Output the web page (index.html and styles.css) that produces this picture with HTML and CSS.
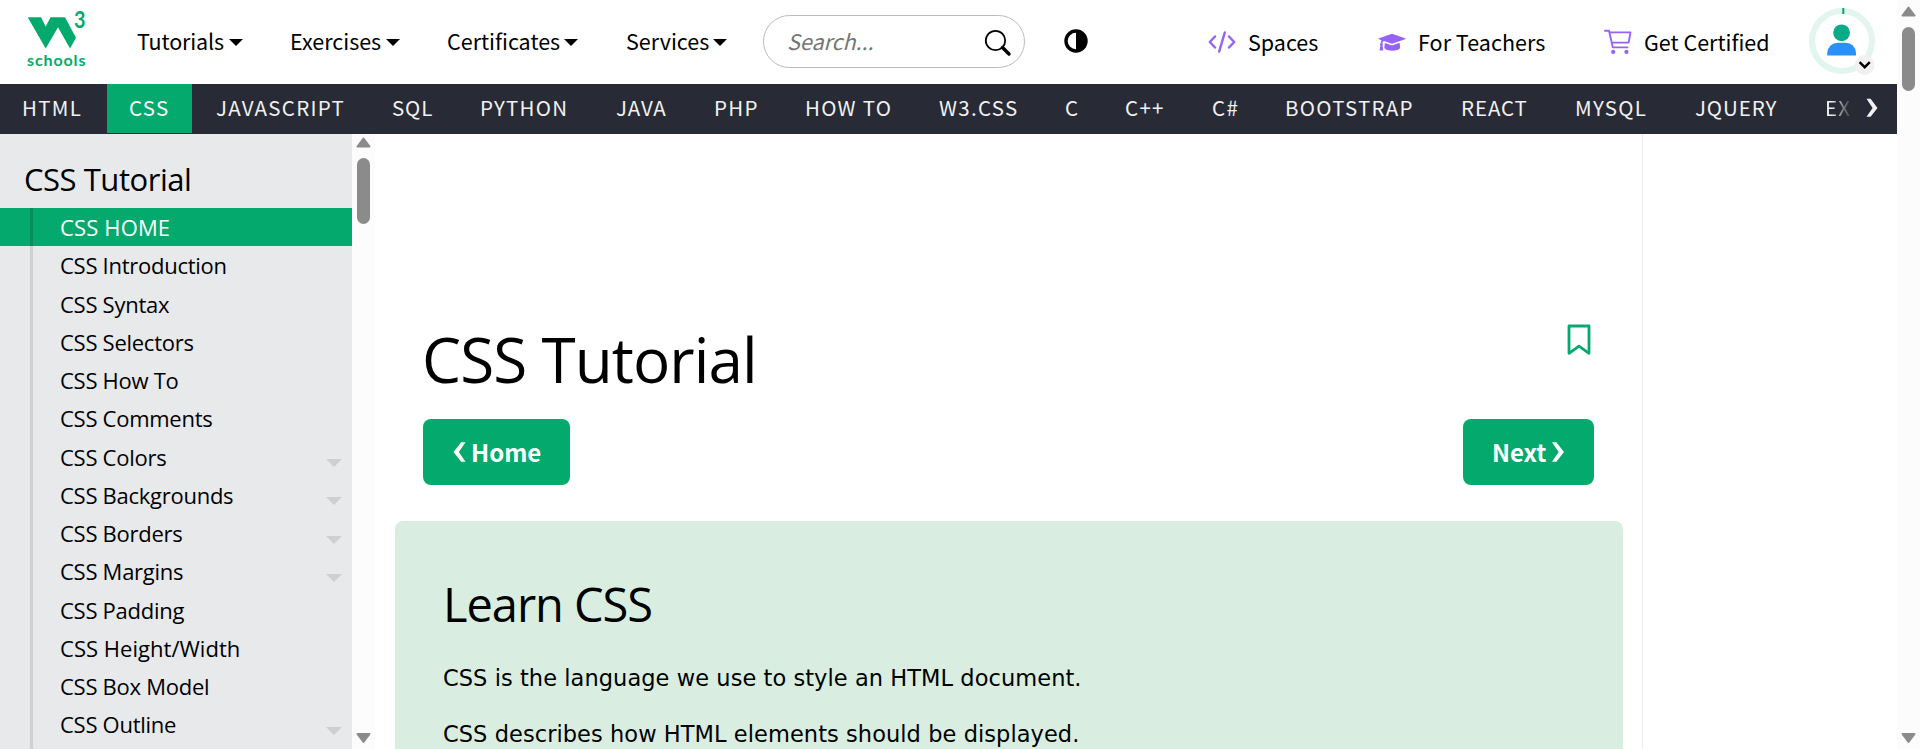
FILE: index.html
```html
<!DOCTYPE html>
<html lang="en">
<head>
<meta charset="utf-8">
<title>CSS Tutorial</title>
<link rel="stylesheet" href="styles.css">
</head>
<body>
<div class="window">
  <div class="page">
    <header class="top">
      <a class="logo"><svg width="64" height="66" viewBox="25 4 64 66">
        <path fill="#04aa6d" d="M27.7 17.3H41L45.7 26.5L50.6 17.3H65L76 37.7L70 48.4L58 27.3L45.7 48.6Z"/>
        <text class="logo-three" x="74" y="28" textLength="11.5" lengthAdjust="spacingAndGlyphs">3</text>
        <text class="logo-name" x="27" y="66" textLength="58.5">schools</text>
      </svg></a>
      <nav class="menu">
        <a class="menu-item tutorials">Tutorials<i class="caret"></i></a>
        <a class="menu-item exercises">Exercises<i class="caret"></i></a>
        <a class="menu-item certificates">Certificates<i class="caret"></i></a>
        <a class="menu-item services">Services<i class="caret"></i></a>
      </nav>
      <div class="search">
        <span>Search...</span>
        <svg width="26" height="26" viewBox="0 0 26 26" fill="none" stroke="#000"><circle cx="10.5" cy="10.5" r="9.7" stroke-width="1.8"/><path d="M17.5 17.5L24 24" stroke-width="3.4" stroke-linecap="round"/></svg>
      </div>
      <svg class="contrast" width="24" height="24" viewBox="0 0 24 24"><circle cx="12" cy="12" r="10" fill="#fff" stroke="#000" stroke-width="3.4"/><path d="M12 1a11 11 0 0 1 0 22z"/></svg>
      <nav class="tools">
        <a class="tool spaces"><svg width="28" height="24" viewBox="0 0 28 24" fill="none" stroke="#9763f6" stroke-width="2.5" stroke-linecap="round" stroke-linejoin="round"><path d="M7 6.5L1.8 12L7 17.5M21 6.5L26.2 12L21 17.5M16.8 2.5L11.2 21.5"/></svg><span>Spaces</span></a>
        <a class="tool teachers"><svg width="28" height="24" viewBox="0 0 28 24"><path fill="#9763f6" d="M14 3.8L27 8.2Q28.2 8.7 27 9.3L14 13.8L6 11.1Q4.5 11.5 4.4 13.5Q5.5 14.5 4.5 15.7L5.3 20.5H1.5L2.4 15.7Q1.3 14.4 2.7 13.2Q2.8 11.5 3.6 10.3L1 9.3Q0 8.7 1 8.2ZM6.9 13L14 15.4L21.6 12.8L22.2 18Q20 20.7 14.3 20.7Q8.5 20.7 6.3 18Z"/></svg><span>For Teachers</span></a>
        <a class="tool certified"><svg width="28" height="26" viewBox="0 0 28 26" fill="none" stroke="#9763f6" stroke-width="1.9" stroke-linejoin="round" stroke-linecap="round"><path d="M1 1.8H5L8.8 18.4H23.5M5.4 3.4H26.5L24.6 13.6H7.8"/><circle cx="9.2" cy="22.9" r="2.1" fill="#9763f6" stroke="none"/><circle cx="22.4" cy="22.9" r="2.1" fill="#9763f6" stroke="none"/></svg><span>Get Certified</span></a>
      </nav>
      <svg class="avatar" width="68" height="70" viewBox="0 0 68 70">
        <circle cx="34" cy="34" r="30" fill="none" stroke="#e2f5ee" stroke-width="6"/>
        <path d="M34.3 1h2v6h-2z" fill="#04aa6d"/>
        <circle cx="33.6" cy="25.8" r="8.4" fill="#0caa86"/>
        <path d="M19.2 48.6V46Q20.5 36 30 35.8H37.5Q47 36 48 46V48.6Z" fill="#2b90ff"/>
        <circle cx="56.7" cy="58" r="10" fill="#f1f1f1"/>
        <path d="M51.6 55.2L56.7 60.2L61.8 55.2" fill="none" stroke="#000" stroke-width="2.4"/>
      </svg>
    </header>
    <nav class="langs">
      <a>HTML</a><a class="active">CSS</a><a>JAVASCRIPT</a><a class="tight">SQL</a><a>PYTHON</a><a class="tight">JAVA</a><a>PHP</a><a>HOW TO</a><a>W3.CSS</a><a>C</a><a>C++</a><a>C#</a><a>BOOTSTRAP</a><a class="tight">REACT</a><a>MYSQL</a><a class="tight">JQUERY</a><a class="cut">EXCEL</a>
      <span class="more"><svg width="12" height="20" viewBox="0 0 12 20"><path d="M.5 .8H4.6L11.5 10L4.6 18.8H.5L6.6 10Z" fill="#f1f1f1"/></svg></span>
    </nav>
    <div class="body">
      <aside class="side">
        <h2>CSS Tutorial</h2>
        <ul>
          <li class="active roomy">CSS HOME</li>
          <li>CSS Introduction</li>
          <li>CSS Syntax</li>
          <li>CSS Selectors</li>
          <li>CSS How To</li>
          <li>CSS Comments</li>
          <li class="sub">CSS Colors</li>
          <li class="sub">CSS Backgrounds</li>
          <li class="sub">CSS Borders</li>
          <li class="sub">CSS Margins</li>
          <li>CSS Padding</li>
          <li class="wide">CSS Height/Width</li>
          <li>CSS Box Model</li>
          <li class="sub">CSS Outline</li>
        </ul>
      </aside>
      <div class="scroll side-scroll">
        <svg width="15" height="11" viewBox="0 0 15 11"><path d="M7.5 1.5L13.5 9.5H1.5Z"/></svg>
        <div class="thumb"></div>
        <svg class="down" width="15" height="12" viewBox="0 0 15 12"><path d="M7.5 10L13.5 2H1.5Z"/></svg>
      </div>
      <main class="main">
        <div class="title"><h1>CSS Tutorial</h1>
          <svg width="24" height="32" viewBox="0 0 24 32"><path d="M2 2H22V29.3L12 22.2L2 29.3Z" fill="none" stroke="#04aa6d" stroke-width="2.8" stroke-linejoin="round"/></svg>
        </div>
        <div class="pager">
          <a class="btn"><svg width="12" height="20" viewBox="0 0 12 20"><path d="M12.5 .3H8.2L.5 10L8.2 19.7H12.5L5.8 10Z" fill="#fff"/></svg>Home</a>
          <a class="btn next">Next<svg width="12" height="20" viewBox="0 0 12 20"><path d="M0 .3H4.3L12 10L4.3 19.7H0L6.7 10Z" fill="#fff"/></svg></a>
        </div>
        <section class="panel">
          <h2>Learn CSS</h2>
          <p>CSS is the language we use to style an HTML document.</p>
          <p>CSS describes how HTML elements should be displayed.</p>
        </section>
      </main>
    </div>
  </div>
  <div class="scroll page-scroll">
    <svg width="15" height="11" viewBox="0 0 15 11"><path d="M7.5 1.5L13.5 9.5H1.5Z"/></svg>
    <div class="thumb"></div>
    <svg class="down" width="15" height="12" viewBox="0 0 15 12"><path d="M7.5 10L13.5 2H1.5Z"/></svg>
  </div>
</div>
</body>
</html>
```
FILE: styles.css
```css
* { box-sizing: border-box; margin: 0; padding: 0; }
body { background: #fff; color: #000; overflow: hidden; font-family: "Open Sans", sans-serif; }
svg { display: block; flex: none; overflow: visible; }
.window { display: flex; width: 1920px; height: 749px; overflow: hidden; }
.page { width: 1897px; display: flex; flex-direction: column; }

/* Header */
.top { height: 84px; display: flex; align-items: flex-start; font: 21.5px/81px "Noto Sans CJK SC", sans-serif; white-space: nowrap; }
.logo { padding: 4px 0 0 25px; width: 137px; }
.logo-three { font: bold 22px Lato, sans-serif; fill: #04aa6d; }
.logo-name { font: bold 16px Lato, sans-serif; fill: #04aa6d; }
.menu { display: flex; }
.menu-item { display: flex; align-items: center; justify-content: space-between; margin-right: 47px; }
.tutorials { width: 106px; letter-spacing: -.15px; }
.exercises { width: 110px; }
.certificates { width: 131px; }
.services { width: 102px; margin-right: 36px; padding-left: 1px; }
.caret { border: 7px solid transparent; border-top: 7.5px solid #000; border-bottom: 0; margin-top: 4px; }
.search { width: 262px; height: 53px; margin-top: 15px; padding: 0 13px 0 23px; border: 1px solid #bbb; border-radius: 27px; display: flex; align-items: center; justify-content: space-between; color: #757575; font-style: italic; line-height: 50px; }
.search span { margin-top: -1px; }
.search svg { margin-top: 2px; }
.contrast { margin: 29px 0 0 39px; }
.tools { display: flex; margin-left: 120px; }
.tool { display: flex; align-items: center; height: 84px; line-height: 84px; }
.tool svg { margin-right: 12px; }
.spaces { width: 170px; }
.teachers { width: 226px; letter-spacing: .03px; }
.certified { width: 204px; }
.avatar { margin-top: 7px; }

/* Language bar */
.langs { height: 50px; background: #282a35; color: #f1f1f1; display: grid; grid-template-columns: 107px 87px 176px 88px 136px 98px 91px 134px 126px 60px 87px 73px 176px 114px 120px 130px 51px 43px; overflow: hidden; font: 20.5px/47px "Noto Sans CJK SC", sans-serif; letter-spacing: 1.3px; white-space: nowrap; }
.langs a { height: 49px; padding-left: 22px; overflow: hidden; }
.langs .active { width: 85px; background: #04aa6d; color: #fff; }
.langs .tight { letter-spacing: .9px; }
.langs .cut { -webkit-mask-image: linear-gradient(90deg, #000 55%, transparent 98%); mask-image: linear-gradient(90deg, #000 55%, transparent 98%); }
.more { padding: 14px 0 0 12px; }

/* Sidebar */
.body { display: flex; height: 615px; overflow: hidden; }
.side { width: 352px; background: #e7e9eb; overflow: hidden; }
.side h2 { height: 74px; padding-left: 24px; font-size: 31px; font-weight: 400; line-height: 90px; letter-spacing: -.46px; }
.side ul { list-style: none; height: 541px; background: linear-gradient(#cfd0d2, #cfd0d2) 30px 0 / 3px 100% no-repeat; }
.side li { height: 38.25px; padding: 0 10px 0 60px; display: flex; justify-content: space-between; font-size: 22px; line-height: 38px; letter-spacing: -.27px; white-space: nowrap; }
.side .roomy { letter-spacing: .15px; }
.side .wide { letter-spacing: .03px; }
.side .active { color: #fff; background: linear-gradient(#048f5c, #048f5c) 30px 0 / 3px 100% no-repeat, #04aa6d; }
.side .sub::after { content: ""; margin-top: 21.5px; height: 0; border: 8px solid transparent; border-top: 8px solid #cecfd1; border-bottom: 0; }

/* Scrollbars */
.scroll { width: 23px; flex: none; background: #fcfcfc; display: flex; flex-direction: column; align-items: center; }
.scroll path { fill: #8b8b8b; stroke: #8b8b8b; stroke-width: 2; stroke-linejoin: round; }
.thumb { width: 13px; border-radius: 7px; background: #8b8b8b; }
.down { margin-top: auto; }
.side-scroll { padding: 3px 0 5px; }
.side-scroll .thumb { height: 66px; margin-top: 10px; }
.page-scroll { padding: 6px 0 5px; }
.page-scroll .thumb { height: 64px; margin-top: 10px; }

/* Content */
.main { width: 1268px; padding: 190px 19px 0 20px; border-right: 1px solid #eee; }
.title { display: flex; justify-content: space-between; padding: 0 32px 0 27px; height: 95px; }
.title h1 { font-size: 62px; font-weight: 400; line-height: 66px; letter-spacing: -.92px; padding-top: 2px; }
.pager { display: flex; justify-content: space-between; padding: 0 29px 0 28px; }
.btn { width: 147px; height: 66px; border-radius: 8px; background: #04aa6d; color: #fff; display: flex; align-items: center; padding-left: 30px; gap: 6px; font: bold 24px/66px "Noto Sans CJK SC", sans-serif; letter-spacing: 0; }
.btn.next { width: 131px; padding-left: 29px; }
.panel { margin-top: 36px; height: 260px; border-radius: 8px; background: #d9eee1; padding: 52px 48px 0; }
.panel h2 { font-size: 47px; font-weight: 400; line-height: 62px; letter-spacing: -1.05px; }
.panel p { font: 22.5px/34px "DejaVu Sans", sans-serif; letter-spacing: .06px; margin-top: 22px; white-space: nowrap; }
.panel h2 + p { margin-top: 26px; }
```
